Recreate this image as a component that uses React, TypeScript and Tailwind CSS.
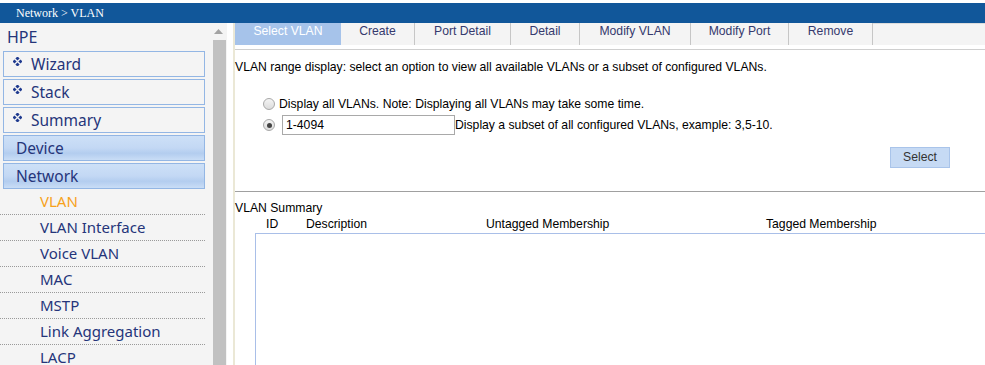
import React from "react";

const Diamond = () => (
  <svg width="9" height="9" viewBox="0 0 9 9" className="shrink-0">
    <g fill="#1f3a8f">
      <rect x="3" y="0" width="3" height="3" transform="rotate(45 4.5 1.5)" />
      <rect x="3" y="6" width="3" height="3" transform="rotate(45 4.5 7.5)" />
      <rect x="0" y="3" width="3" height="3" transform="rotate(45 1.5 4.5)" />
      <rect x="6" y="3" width="3" height="3" transform="rotate(45 7.5 4.5)" />
    </g>
  </svg>
);

const sideFont = { fontFamily: '"Noto Sans", "Open Sans", sans-serif' };

function TopBox({ label }: { label: string }) {
  return (
    <div className="shrink-0 ml-[3px] mb-[2px] w-[202px] h-[26px] border border-[#93b6e4] bg-[#f4f4f4] flex items-start">
      <div className="ml-[9px] mt-[5px]">
        <Diamond />
      </div>
      <span className="ml-[9px] text-[15.5px] leading-[24px] text-[#25357a]">{label}</span>
    </div>
  );
}

function GroupBox({ label, last }: { label: string; last?: boolean }) {
  return (
    <div
      className={`shrink-0 ml-[3px] ${last ? "mb-0" : "mb-[2px]"} w-[202px] h-[26px] border border-[#93b6e4] bg-[linear-gradient(to_bottom,#cde0f7_0%,#c3d8f4_50%,#b3cdef_72%,#c9ddf6_100%)] flex items-center`}
    >
      <span className="ml-[12px] text-[15.5px] leading-[24px] text-[#25357a]">{label}</span>
    </div>
  );
}

function SubItem({ label, active }: { label: string; active?: boolean }) {
  return (
    <div className="shrink-0 w-[205px] h-[26px] pb-[1px] border-b border-dotted border-[#9a9a9a] flex items-center">
      <span className={`ml-[40px] text-[15px] leading-[24px] ${active ? "text-[#f7a21b]" : "text-[#25357a]"}`}>
        {label}
      </span>
    </div>
  );
}

const tabs = [
  { label: "Select VLAN", w: 106, active: true },
  { label: "Create", w: 74 },
  { label: "Port Detail", w: 96 },
  { label: "Detail", w: 69 },
  { label: "Modify VLAN", w: 111 },
  { label: "Modify Port", w: 98 },
  { label: "Remove", w: 84 },
];

function Radio({ checked }: { checked?: boolean }) {
  return (
    <span className="w-[12px] h-[12px] rounded-full border border-[#a8a8a8] bg-[linear-gradient(to_bottom,#f4f4f4,#dcdcdc)] flex items-center justify-center shrink-0">
      {checked && <span className="w-[5px] h-[5px] rounded-full bg-[#444]" />}
    </span>
  );
}

export default function App() {
  return (
    <div className="w-[985px] h-[365px] overflow-hidden bg-white flex flex-col">
      <div className="h-[3px] shrink-0 bg-white" />
      <div
        className="h-[20px] shrink-0 bg-[#11579a] text-white text-[12px] leading-[20px] pl-[16px]"
        style={{ fontFamily: '"Liberation Serif", serif' }}
      >
        Network &gt; VLAN
      </div>
      <div className="flex flex-1 min-h-0">
        {/* Sidebar */}
        <div className="w-[227px] bg-[#f4f4f4] flex" style={sideFont}>
          <div className="w-[210px] flex flex-col">
            <div className="shrink-0 h-[28px] pl-[7px] text-[16px] leading-[28px] text-[#25357a]">HPE</div>
            <TopBox label="Wizard" />
            <TopBox label="Stack" />
            <TopBox label="Summary" />
            <GroupBox label="Device" />
            <GroupBox label="Network" last />
            <SubItem label="VLAN" active />
            <SubItem label="VLAN Interface" />
            <SubItem label="Voice VLAN" />
            <SubItem label="MAC" />
            <SubItem label="MSTP" />
            <SubItem label="Link Aggregation" />
            <SubItem label="LACP" />
          </div>
          <div className="w-[17px] flex flex-col items-center">
            <div className="h-[17px] w-full flex items-center justify-center">
              <svg width="9" height="5" viewBox="0 0 9 5">
                <path d="M0 5 L4.5 0 L9 5 Z" fill="#a3a3a3" />
              </svg>
            </div>
            <div className="ml-[2px] w-[13px] flex-1 bg-[#c1c1c1]" />
          </div>
        </div>
        <div className="w-[6px] bg-white" />
        <div className="w-[2px] bg-[#ebe8d6]" />
        {/* Content */}
        <div className="flex-1 flex flex-col text-[12.2px]" style={{ fontFamily: '"Liberation Sans", Arial, sans-serif' }}>
          <div className="h-[22px] shrink-0 bg-[#f4f4f4] flex">
            {tabs.map((t) => (
              <div
                key={t.label}
                style={{ width: t.w }}
                className={`h-full flex items-center justify-center ${
                  t.active ? "bg-[#a6c3ea] text-white" : "border-r border-[#c6c6c6] text-[#363a6e]"
                }`}
              >
                <span className="-mt-[5px]">{t.label}</span>
              </div>
            ))}
            <div className="flex-1 border-t border-[#dcdcdc]" />
          </div>
          <div className="h-[4px] shrink-0" />
          <div className="h-px shrink-0 bg-[#cfcfcf]" />
          <div className="mt-[10px] shrink-0 h-[14px] leading-[14px] text-black">
            VLAN range display: select an option to view all available VLANs or a subset of configured VLANs.
          </div>
          <div className="mt-[23px] shrink-0 h-[14px] flex items-center pl-[28px] text-black">
            <Radio />
            <span className="ml-[4px]">Display all VLANs. Note: Displaying all VLANs may take some time.</span>
          </div>
          <div className="mt-[4px] shrink-0 h-[20px] flex items-center pl-[28px] text-black">
            <Radio checked />
            <div className="ml-[7px] w-[173px] h-[20px] border border-[#a9a9a9] flex items-center pl-[3px]">
              1-4094
            </div>
            <span>Display a subset of all configured VLANs, example: 3,5-10.</span>
          </div>
          <div className="mt-[12px] shrink-0 h-[21px] flex">
            <div className="ml-[655px] w-[60px] h-[21px] bg-[#c6daf4] border border-[#a9c4ea] flex items-center justify-center text-[#333]">
              Select
            </div>
          </div>
          <div className="mt-[23px] shrink-0 h-px bg-[#a0a0a0]" />
          <div className="mt-[9px] shrink-0 h-[14px] leading-[14px] text-black">VLAN Summary</div>
          <div className="mt-[2px] shrink-0 h-[14px] leading-[14px] text-black flex">
            <span className="ml-[31px] w-[40px]">ID</span>
            <span className="w-[180px]">Description</span>
            <span className="w-[280px]">Untagged Membership</span>
            <span>Tagged Membership</span>
          </div>
          <div className="mt-[2px] ml-[20px] flex-1 border-l border-t border-[#a9bfe8]" />
        </div>
      </div>
    </div>
  );
}
